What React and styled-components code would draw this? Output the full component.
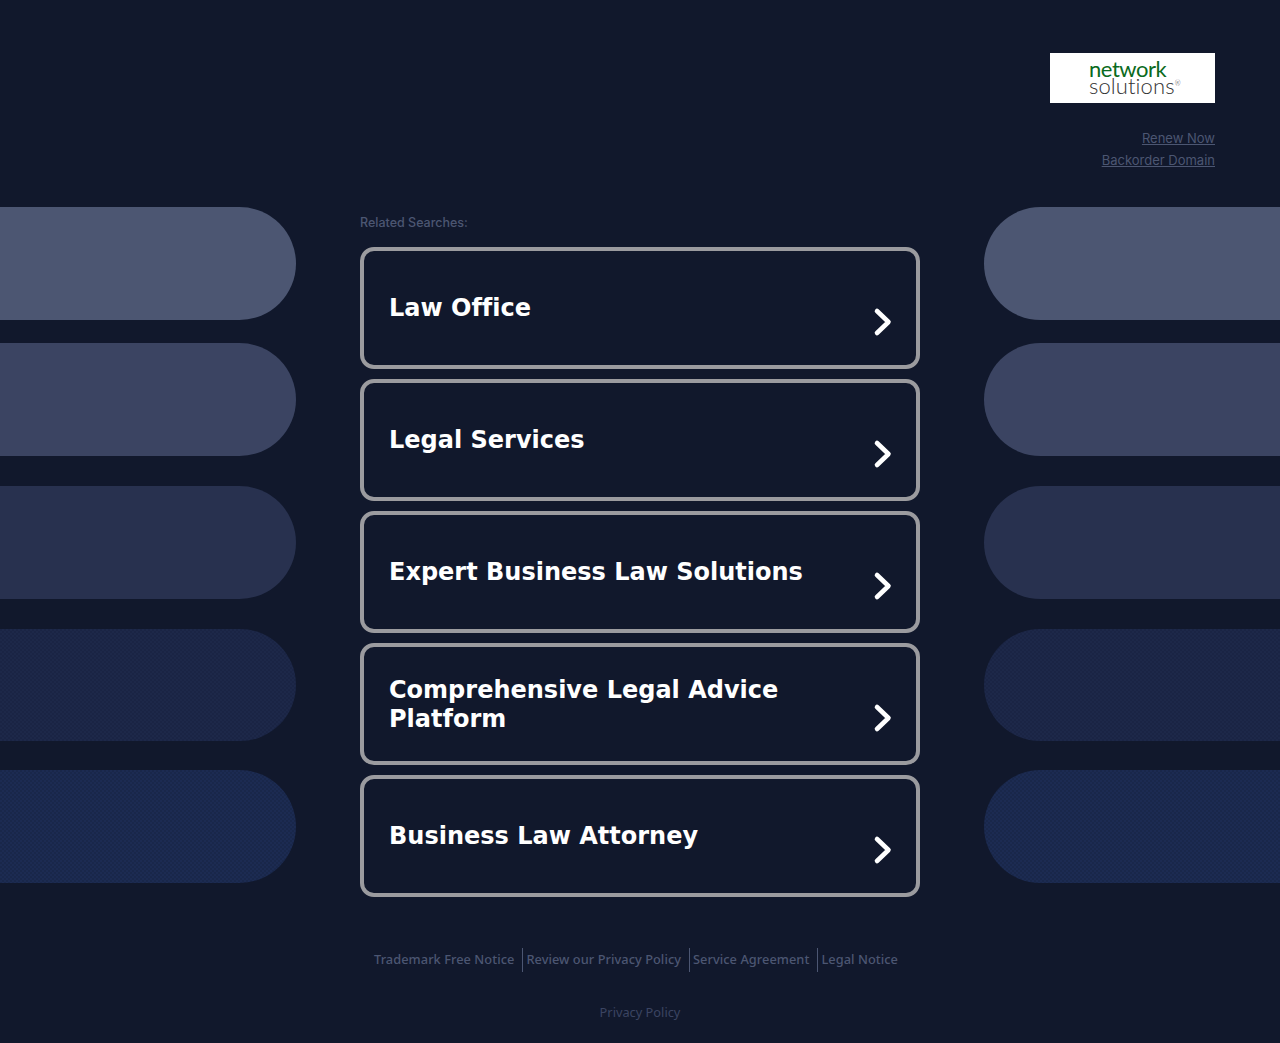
import React from "react";
import styled, { createGlobalStyle } from "styled-components";

const GlobalStyle = createGlobalStyle`
  html, body {
    margin: 0;
    padding: 0;
    background-color: #11182c;
  }
`;

const Page = styled.div`
  height: 1043px;
  overflow: hidden;
  background-color: #11182c;
  font-family: "DejaVu Sans", sans-serif;
`;

const Header = styled.header`
  height: 207px;
  padding: 53px 65px 0 0;
  box-sizing: border-box;
  display: flex;
  flex-direction: column;
  align-items: flex-end;
`;

const Logo = styled.div`
  flex: none;
  width: 165px;
  height: 50px;
  background-color: #fff;
  display: flex;
  flex-direction: column;
  justify-content: center;
  padding: 0 0 2px 39px;
  box-sizing: border-box;
  font-family: "Lato", sans-serif;
  line-height: 17px;
  font-size: 22px;
`;

const LogoTop = styled.span`
  color: #0a6a20;
  letter-spacing: -0.45px;
`;

const LogoBottom = styled.span`
  color: #333;
  font-weight: 300;
  letter-spacing: 0.1px;

  sup {
    font-size: 7px;
    line-height: 0;
    letter-spacing: 0;
  }
`;

const HeaderLinks = styled.div`
  margin-top: 26px;
  display: flex;
  flex-direction: column;
  align-items: flex-end;
  gap: 4px;
`;

const HeaderLink = styled.a`
  font-family: "Inter", sans-serif;
  font-size: 13px;
  line-height: 18px;
  color: #4c5672;
  text-decoration: underline;
`;

const Main = styled.main`
  display: grid;
  grid-template-columns: 296px 560px 296px;
  justify-content: space-between;
  column-gap: 64px;
`;

const Side = styled.div`
  display: flex;
  flex-direction: column;
`;

const Pill = styled.div`
  height: ${(p) => p.$height}px;
  margin-top: ${(p) => p.$top}px;
  background-color: ${(p) => p.$color};
  border-radius: ${(p) => (p.$right ? "57px 0 0 57px" : "0 57px 57px 0")};
  background-image: ${(p) =>
    p.$dither
      ? `repeating-conic-gradient(${p.$dither} 0 25%, transparent 0 50%)`
      : "none"};
  background-size: 4px 4px;
`;

const Center = styled.div`
  display: flex;
  flex-direction: column;
`;

const RelatedLabel = styled.div`
  height: 29px;
  padding-top: 1px;
  margin-bottom: 10px;
  font-family: "Inter", sans-serif;
  font-size: 12.5px;
  font-weight: 500;
  line-height: 30px;
  color: #4c5672;
`;

const Cards = styled.div`
  display: flex;
  flex-direction: column;
  gap: 10px;
`;

const Card = styled.a`
  height: 122px;
  box-sizing: border-box;
  border: 4px solid #9b9b9f;
  border-radius: 14px;
  padding: 1px 25px 0;
  display: flex;
  align-items: center;
  justify-content: space-between;
  gap: 40px;
`;

const CardTitle = styled.span`
  font-size: 24px;
  font-weight: 700;
  line-height: 29px;
  font-variant-ligatures: none;
  color: #fff;
`;

const Chevron = styled.svg`
  flex: none;
  width: 20px;
  height: 30px;
  margin-top: 26px;
  margin-right: -2px;
`;

const Footer = styled.footer`
  margin-top: 51px;
  display: flex;
  flex-direction: column;
  align-items: center;
`;

const FooterLinks = styled.div`
  display: flex;
  justify-content: center;
`;

const FooterLink = styled.a`
  height: 24px;
  padding: ${(p) => (p.$first ? "0 8px 0 0" : "0 8px 0 3px")};
  font-family: "Noto Sans", sans-serif;
  font-size: 12.8px;
  font-weight: 500;
  letter-spacing: 0.05px;
  line-height: 22px;
  color: #4c5672;
  border-left: ${(p) => (p.$first ? "none" : "1px solid #4c5672")};
`;

const PrivacyLink = styled.a`
  margin-top: 30px;
  font-family: "Noto Sans", sans-serif;
  font-size: 12.8px;
  line-height: 20px;
  color: #3b4462;
`;

const pills = [
  { top: 0, height: 113, color: "#4c5672" },
  { top: 23, height: 113, color: "#3b4462" },
  { top: 30, height: 113, color: "#28314f" },
  { top: 30, height: 112, color: "#1a2444", dither: "#1d2849" },
  { top: 29, height: 113, color: "#19274a", dither: "#1c2b52" },
];

const cards = [
  "Law Office",
  "Legal Services",
  "Expert Business Law Solutions",
  "Comprehensive Legal Advice Platform",
  "Business Law Attorney",
];

const footerLinks = [
  "Trademark Free Notice",
  "Review our Privacy Policy",
  "Service Agreement",
  "Legal Notice",
];

const SidePills = ({ right }) => (
  <Side>
    {pills.map((pill, i) => (
      <Pill
        key={i}
        $top={pill.top}
        $height={pill.height}
        $color={pill.color}
        $dither={pill.dither}
        $right={right}
      />
    ))}
  </Side>
);

const App = () => {
  return (
    <Page>
      <GlobalStyle />
      <Header>
        <Logo>
          <LogoTop>network</LogoTop>
          <LogoBottom>
            solutions<sup>®</sup>
          </LogoBottom>
        </Logo>
        <HeaderLinks>
          <HeaderLink>Renew Now</HeaderLink>
          <HeaderLink>Backorder Domain</HeaderLink>
        </HeaderLinks>
      </Header>
      <Main>
        <SidePills />
        <Center>
          <RelatedLabel>Related Searches:</RelatedLabel>
          <Cards>
            {cards.map((title) => (
              <Card key={title}>
                <CardTitle>{title}</CardTitle>
                <Chevron viewBox="0 0 20 30">
                  <path
                    d="M4 4 L15.5 15 L4 26"
                    fill="none"
                    stroke="#fff"
                    strokeWidth="4.6"
                    strokeLinecap="round"
                    strokeLinejoin="round"
                  />
                </Chevron>
              </Card>
            ))}
          </Cards>
        </Center>
        <SidePills right />
      </Main>
      <Footer>
        <FooterLinks>
          {footerLinks.map((label, i) => (
            <FooterLink key={label} $first={i === 0}>
              {label}
            </FooterLink>
          ))}
        </FooterLinks>
        <PrivacyLink>Privacy Policy</PrivacyLink>
      </Footer>
    </Page>
  );
};

export default App;
